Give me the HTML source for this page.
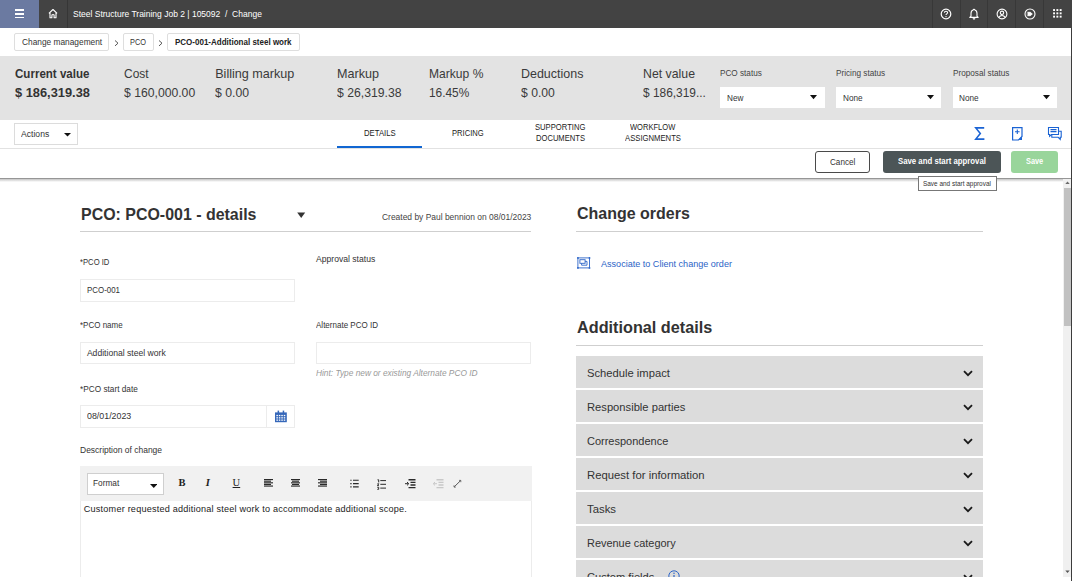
<!DOCTYPE html>
<html><head><meta charset="utf-8"><style>
html,body{margin:0;padding:0;width:1072px;height:581px;overflow:hidden;background:#fff;position:relative}
body>div,body>svg{position:absolute}
.t{position:absolute;white-space:pre;font-family:"Liberation Sans",sans-serif}
</style></head><body>
<div style="left:0px;top:0px;width:1072px;height:28px;background:#434343"></div>
<div style="left:0px;top:0px;width:39px;height:28px;background:#6b7aa1"></div>
<div style="left:15px;top:9.3px;width:9px;height:1.35px;background:#fff"></div>
<div style="left:15px;top:13.2px;width:9px;height:1.35px;background:#fff"></div>
<div style="left:15px;top:16.9px;width:9px;height:1.35px;background:#fff"></div>
<div style="left:67px;top:0px;width:1px;height:28px;background:#363636"></div>
<svg style="position:absolute;left:47px;top:8px" width="12" height="11" viewBox="0 0 12 11"><path d="M1.9 5.4 L6 1.5 L10.1 5.4 M3 4.5 V9.8 H4.9 V7 Q6 6 7.1 7 V9.8 H9 V4.5" fill="none" stroke="#fff" stroke-width="1.1" stroke-linejoin="round"/></svg>
<div class="t" style="left:73.4px;top:9.07px;font-size:9.6px;line-height:9.6px;color:#fff;transform:scaleX(0.886);transform-origin:0 0;font-weight:500;">Steel Structure Training Job 2 | 105092&nbsp;&nbsp;/&nbsp;&nbsp;Change</div>
<div style="left:932.3px;top:0px;width:1.0px;height:28px;background:#383838"></div>
<div style="left:960.2px;top:0px;width:1.0px;height:28px;background:#383838"></div>
<div style="left:987.4px;top:0px;width:1.0px;height:28px;background:#383838"></div>
<div style="left:1015px;top:0px;width:1px;height:28px;background:#383838"></div>
<div style="left:1042.8px;top:0px;width:1.0px;height:28px;background:#383838"></div>
<svg style="position:absolute;left:940px;top:7.5px" width="12" height="12" viewBox="0 0 12 12"><circle cx="6" cy="6" r="4.8" fill="none" stroke="#fff" stroke-width="1.2"/><path d="M4.4 4.7 Q4.4 3.2 6 3.2 Q7.6 3.2 7.6 4.6 Q7.6 5.5 6.6 5.9 Q6 6.2 6 7" fill="none" stroke="#fff" stroke-width="1.1"/><circle cx="6" cy="8.6" r="0.7" fill="#fff"/></svg>
<svg style="position:absolute;left:968px;top:7.5px" width="12" height="12" viewBox="0 0 12 12"><path d="M6 1.2 Q6.8 1.2 6.8 2 Q9 2.6 9 5.4 V8.2 L10.2 9.4 H1.8 L3 8.2 V5.4 Q3 2.6 5.2 2 Q5.2 1.2 6 1.2 Z" fill="none" stroke="#fff" stroke-width="1.1" stroke-linejoin="round"/><path d="M4.9 10.3 Q6 11.6 7.1 10.3" fill="none" stroke="#fff" stroke-width="1.1"/></svg>
<svg style="position:absolute;left:996px;top:7.5px" width="12" height="12" viewBox="0 0 12 12"><circle cx="6" cy="6" r="4.9" fill="none" stroke="#fff" stroke-width="1.1"/><circle cx="6" cy="4.8" r="1.7" fill="none" stroke="#fff" stroke-width="1.1"/><path d="M2.9 9.4 Q4 7.5 6 7.5 Q8 7.5 9.1 9.4" fill="none" stroke="#fff" stroke-width="1.1"/></svg>
<svg style="position:absolute;left:1024px;top:7.5px" width="12" height="12" viewBox="0 0 12 12"><circle cx="6" cy="6" r="5" fill="none" stroke="#fff" stroke-width="1.1"/><path d="M3.3 4.3 H6.3 L8.3 6 L6.3 7.7 H3.3 Z" fill="#fff" stroke="#fff" stroke-width="0.9" stroke-linejoin="round"/><path d="M3.3 4.3 V7.7" stroke="#434343" stroke-width="0.6"/></svg>
<svg style="position:absolute;left:1053.3px;top:9.2px" width="10" height="10" viewBox="0 0 10 10"><rect x="0.1" y="0.1" width="1.9" height="1.9" fill="#fff"/><rect x="0.1" y="3.4" width="1.9" height="1.9" fill="#fff"/><rect x="0.1" y="6.699999999999999" width="1.9" height="1.9" fill="#fff"/><rect x="3.4" y="0.1" width="1.9" height="1.9" fill="#fff"/><rect x="3.4" y="3.4" width="1.9" height="1.9" fill="#fff"/><rect x="3.4" y="6.699999999999999" width="1.9" height="1.9" fill="#fff"/><rect x="6.699999999999999" y="0.1" width="1.9" height="1.9" fill="#fff"/><rect x="6.699999999999999" y="3.4" width="1.9" height="1.9" fill="#fff"/><rect x="6.699999999999999" y="6.699999999999999" width="1.9" height="1.9" fill="#fff"/></svg>
<div style="left:14.3px;top:33.2px;width:95.2px;height:17.6px;border:1px solid #dedede;border-radius:2px;background:#fff;box-sizing:border-box;"></div>
<div class="t" style="left:21.8px;top:38.12px;font-size:8.6px;line-height:8.6px;color:#333;transform:scaleX(0.97);transform-origin:0 0;">Change management</div>
<svg style="position:absolute;left:112.5px;top:39px" width="7" height="8" viewBox="0 0 7 8"><path d="M2 1.5 L5 4.2 L2 6.9" fill="none" stroke="#555" stroke-width="1"/></svg>
<div style="left:123.3px;top:33.2px;width:30.5px;height:17.6px;border:1px solid #dedede;border-radius:2px;background:#fff;box-sizing:border-box;"></div>
<div class="t" style="left:130.4px;top:38.12px;font-size:8.6px;line-height:8.6px;color:#333;transform:scaleX(0.859);transform-origin:0 0;">PCO</div>
<svg style="position:absolute;left:157px;top:39px" width="7" height="8" viewBox="0 0 7 8"><path d="M2 1.5 L5 4.2 L2 6.9" fill="none" stroke="#555" stroke-width="1"/></svg>
<div style="left:167.4px;top:33.2px;width:132.2px;height:17.6px;border:1px solid #dedede;border-radius:2px;background:#fff;box-sizing:border-box;"></div>
<div class="t" style="left:175px;top:38.17px;font-size:8.3px;line-height:8.3px;color:#222;font-weight:bold;transform:scaleX(0.965);transform-origin:0 0;">PCO-001-Additional steel work</div>
<div style="left:0px;top:56px;width:1072px;height:64px;background:#e3e3e3"></div>
<div class="t" style="left:14.5px;top:67.53px;font-size:12.6px;line-height:12.6px;color:#333;font-weight:bold;transform:scaleX(0.917);transform-origin:0 0;">Current value</div>
<div class="t" style="left:14.5px;top:86.73px;font-size:12.6px;line-height:12.6px;color:#333;font-weight:bold;transform:scaleX(1.019);transform-origin:0 0;">$ 186,319.38</div>
<div class="t" style="left:123.6px;top:67.53px;font-size:12.6px;line-height:12.6px;color:#3a3a3a;transform:scaleX(0.95);transform-origin:0 0;">Cost</div>
<div class="t" style="left:123.6px;top:86.73px;font-size:12.6px;line-height:12.6px;color:#3a3a3a;transform:scaleX(0.968);transform-origin:0 0;">$ 160,000.00</div>
<div class="t" style="left:215.2px;top:67.53px;font-size:12.6px;line-height:12.6px;color:#3a3a3a;">Billing markup</div>
<div class="t" style="left:215.2px;top:86.73px;font-size:12.6px;line-height:12.6px;color:#3a3a3a;transform:scaleX(0.971);transform-origin:0 0;">$ 0.00</div>
<div class="t" style="left:337px;top:67.53px;font-size:12.6px;line-height:12.6px;color:#3a3a3a;">Markup</div>
<div class="t" style="left:337px;top:86.73px;font-size:12.6px;line-height:12.6px;color:#3a3a3a;transform:scaleX(0.969);transform-origin:0 0;">$ 26,319.38</div>
<div class="t" style="left:428.8px;top:67.53px;font-size:12.6px;line-height:12.6px;color:#3a3a3a;transform:scaleX(0.959);transform-origin:0 0;">Markup %</div>
<div class="t" style="left:428.8px;top:86.73px;font-size:12.6px;line-height:12.6px;color:#3a3a3a;transform:scaleX(0.943);transform-origin:0 0;">16.45%</div>
<div class="t" style="left:521.2px;top:67.53px;font-size:12.6px;line-height:12.6px;color:#3a3a3a;transform:scaleX(0.99);transform-origin:0 0;">Deductions</div>
<div class="t" style="left:521.2px;top:86.73px;font-size:12.6px;line-height:12.6px;color:#3a3a3a;transform:scaleX(0.965);transform-origin:0 0;">$ 0.00</div>
<div class="t" style="left:642.7px;top:67.53px;font-size:12.6px;line-height:12.6px;color:#3a3a3a;transform:scaleX(0.977);transform-origin:0 0;">Net value</div>
<div class="t" style="left:642.7px;top:86.73px;font-size:12.6px;line-height:12.6px;color:#3a3a3a;transform:scaleX(0.944);transform-origin:0 0;">$ 186,319...</div>
<div class="t" style="left:719.7px;top:69.03px;font-size:8.7px;line-height:8.7px;color:#444;transform:scaleX(0.942);transform-origin:0 0;">PCO status</div>
<div style="left:720px;top:86.7px;width:104.5px;height:21.1px;background:#fff"></div>
<div class="t" style="left:726.5px;top:93.73px;font-size:8.7px;line-height:8.7px;color:#333;transform:scaleX(0.943);transform-origin:0 0;">New</div>
<svg style="position:absolute;left:810.0px;top:95px" width="7" height="4.5" viewBox="0 0 7 4.5"><path d="M0 0 H7 L3.5 4.2 Z" fill="#111"/></svg>
<div class="t" style="left:835.9px;top:69.03px;font-size:8.7px;line-height:8.7px;color:#444;transform:scaleX(0.943);transform-origin:0 0;">Pricing status</div>
<div style="left:836.2px;top:86.7px;width:104.8px;height:21.1px;background:#fff"></div>
<div class="t" style="left:842.7px;top:93.73px;font-size:8.7px;line-height:8.7px;color:#333;transform:scaleX(0.943);transform-origin:0 0;">None</div>
<svg style="position:absolute;left:926.5px;top:95px" width="7" height="4.5" viewBox="0 0 7 4.5"><path d="M0 0 H7 L3.5 4.2 Z" fill="#111"/></svg>
<div class="t" style="left:952.5px;top:69.03px;font-size:8.7px;line-height:8.7px;color:#444;transform:scaleX(0.943);transform-origin:0 0;">Proposal status</div>
<div style="left:952.8px;top:86.7px;width:104.4px;height:21.1px;background:#fff"></div>
<div class="t" style="left:959.3px;top:93.73px;font-size:8.7px;line-height:8.7px;color:#333;transform:scaleX(0.943);transform-origin:0 0;">None</div>
<svg style="position:absolute;left:1042.7px;top:95px" width="7" height="4.5" viewBox="0 0 7 4.5"><path d="M0 0 H7 L3.5 4.2 Z" fill="#111"/></svg>
<div style="left:0px;top:148px;width:1071px;height:1px;background:#e2e2e2"></div>
<div style="left:14.2px;top:123px;width:63.6px;height:22px;border:1px solid #dcdcdc;box-sizing:border-box;"></div>
<div class="t" style="left:21px;top:130.26px;font-size:8.9px;line-height:8.9px;color:#333;transform:scaleX(0.97);transform-origin:0 0;">Actions</div>
<svg style="position:absolute;left:64.3px;top:132.5px" width="7" height="4" viewBox="0 0 7 4"><path d="M0 0 H7 L3.5 3.6 Z" fill="#111"/></svg>
<div class="t" style="left:363.6px;top:128.52px;font-size:8.6px;line-height:8.6px;color:#222;transform:scaleX(0.9);transform-origin:0 0;">DETAILS</div>
<div style="left:337.2px;top:145.9px;width:84.5px;height:1.9px;background:#1166d2"></div>
<div class="t" style="left:452px;top:128.52px;font-size:8.6px;line-height:8.6px;color:#222;transform:scaleX(0.885);transform-origin:0 0;">PRICING</div>
<div class="t" style="left:535.1px;top:122.72px;font-size:8.6px;line-height:8.6px;color:#222;transform:scaleX(0.889);transform-origin:0 0;">SUPPORTING</div>
<div class="t" style="left:536.0px;top:133.92px;font-size:8.6px;line-height:8.6px;color:#222;transform:scaleX(0.884);transform-origin:0 0;">DOCUMENTS</div>
<div class="t" style="left:630.45px;top:122.72px;font-size:8.6px;line-height:8.6px;color:#222;transform:scaleX(0.878);transform-origin:0 0;">WORKFLOW</div>
<div class="t" style="left:625.0px;top:133.92px;font-size:8.6px;line-height:8.6px;color:#222;transform:scaleX(0.895);transform-origin:0 0;">ASSIGNMENTS</div>
<svg style="position:absolute;left:974px;top:126px" width="12" height="15" viewBox="0 0 12 15"><path d="M10.2 1.9 H1.8 L6.3 7.5 L1.8 13.1 H10.4" fill="none" stroke="#1a63d4" stroke-width="1.6" stroke-linejoin="miter"/></svg>
<svg style="position:absolute;left:1011px;top:126px" width="13" height="15" viewBox="0 0 13 15"><path d="M1.6 1.6 H11 V10.5 L7.5 14 H1.6 Z" fill="none" stroke="#1a63d4" stroke-width="1.2"/><path d="M11 10.5 V14 H7.5 Z" fill="#1a63d4"/><path d="M6.3 3.4 V8 M4 5.7 H8.6" stroke="#1a63d4" stroke-width="1.1"/></svg>
<svg style="position:absolute;left:1047px;top:126px" width="16" height="15" viewBox="0 0 16 15"><path d="M1.5 1.5 H11.5 V8.5 H4.5 L2.6 10.2 V8.5 H1.5 Z" fill="#fff" stroke="#1a63d4" stroke-width="1.1"/><path d="M4.8 8.8 V11.3 H11.2 L13.2 13.4 V11.3 H14.2 V5.3 H11.5" fill="none" stroke="#1a63d4" stroke-width="1.1"/><path d="M3.5 3.6 H9.5 M3.5 5.6 H9.5" stroke="#1a63d4" stroke-width="1.1"/></svg>
<div style="left:815.2px;top:151.3px;width:54.6px;height:21.5px;border:1px solid #4a4a4a;border-radius:3px;box-sizing:border-box;background:#fff"></div>
<div class="t" style="left:829.85px;top:157.62px;font-size:8.6px;line-height:8.6px;color:#333;transform:scaleX(0.945);transform-origin:0 0;">Cancel</div>
<div style="left:883.2px;top:151.3px;width:117.4px;height:21.5px;background:#4c5557;border-radius:3px"></div>
<div class="t" style="left:897.7px;top:157.45px;font-size:8.8px;line-height:8.8px;color:#fff;font-weight:bold;transform:scaleX(0.886);transform-origin:0 0;">Save and start approval</div>
<div style="left:1010.6px;top:151.3px;width:47.4px;height:21.5px;background:#99d59b;border-radius:3px"></div>
<div class="t" style="left:1025.7px;top:157.45px;font-size:8.8px;line-height:8.8px;color:#fff;font-weight:bold;transform:scaleX(0.837);transform-origin:0 0;">Save</div>
<div style="left:0px;top:177.5px;width:1071px;height:1.8px;background:#969696"></div>
<div style="left:0px;top:179.3px;width:1071px;height:2.3px;background:linear-gradient(#c4c4c4,#fff)"></div>
<div class="t" style="left:80.5px;top:207.34px;font-size:16.6px;line-height:16.6px;color:#333;font-weight:bold;transform:scaleX(0.961);transform-origin:0 0;">PCO: PCO-001 - details</div>
<svg style="position:absolute;left:297px;top:212px" width="8.5" height="6.5" viewBox="0 0 8.5 6.5"><path d="M0.2 0.5 H8.2 L4.2 6 Z" fill="#333"/></svg>
<div class="t" style="left:382.4px;top:213.03px;font-size:8.7px;line-height:8.7px;color:#444;transform:scaleX(0.972);transform-origin:0 0;">Created by Paul bennion on 08/01/2023</div>
<div style="left:80px;top:231px;width:451px;height:1.2px;background:#cfcfcf"></div>
<div class="t" style="left:80.2px;top:257.62px;font-size:8.6px;line-height:8.6px;color:#333;transform:scaleX(0.892);transform-origin:0 0;">*PCO ID</div>
<div style="left:80.1px;top:279.2px;width:214.7px;height:22.7px;border:1px solid #ececec;box-sizing:border-box;background:#fff;"></div>
<div class="t" style="left:87.3px;top:285.52px;font-size:8.6px;line-height:8.6px;color:#333;transform:scaleX(0.921);transform-origin:0 0;">PCO-001</div>
<div class="t" style="left:316px;top:254.72px;font-size:8.6px;line-height:8.6px;color:#333;">Approval status</div>
<div class="t" style="left:80.2px;top:320.82px;font-size:8.6px;line-height:8.6px;color:#333;transform:scaleX(0.93);transform-origin:0 0;">*PCO name</div>
<div style="left:80.1px;top:342.1px;width:214.7px;height:21.8px;border:1px solid #ececec;box-sizing:border-box;background:#fff;"></div>
<div class="t" style="left:86.9px;top:348.62px;font-size:8.6px;line-height:8.6px;color:#333;">Additional steel work</div>
<div class="t" style="left:316px;top:320.82px;font-size:8.6px;line-height:8.6px;color:#333;transform:scaleX(0.933);transform-origin:0 0;">Alternate PCO ID</div>
<div style="left:316px;top:342.1px;width:215px;height:21.8px;border:1px solid #ececec;box-sizing:border-box;background:#fff;"></div>
<div class="t" style="left:316.4px;top:369.12px;font-size:8.6px;line-height:8.6px;color:#999;font-style:italic;transform:scaleX(0.969);transform-origin:0 0;">Hint: Type new or existing Alternate PCO ID</div>
<div class="t" style="left:80.2px;top:385.02px;font-size:8.6px;line-height:8.6px;color:#333;transform:scaleX(0.96);transform-origin:0 0;">*PCO start date</div>
<div style="left:80.1px;top:405.2px;width:214.7px;height:22.7px;border:1px solid #ececec;box-sizing:border-box;background:#fff;"></div>
<div style="left:266.4px;top:405.2px;width:1.0px;height:22.7px;background:#ececec"></div>
<div class="t" style="left:86.9px;top:412.42px;font-size:8.6px;line-height:8.6px;color:#333;transform:scaleX(1.029);transform-origin:0 0;">08/01/2023</div>
<svg style="position:absolute;left:275px;top:409.8px" width="12" height="13" viewBox="0 0 12 13"><rect x="0" y="2.4" width="11.8" height="9.8" fill="#3567b9"/><rect x="2.6" y="0.6" width="1.5" height="2.6" fill="#3567b9"/><rect x="7.7" y="0.6" width="1.5" height="2.6" fill="#3567b9"/><rect x="1.4" y="4.9" width="1.5" height="1.3" fill="#fff"/><rect x="1.4" y="7.2" width="1.5" height="1.3" fill="#fff"/><rect x="1.4" y="9.5" width="1.5" height="1.3" fill="#fff"/><rect x="3.85" y="4.9" width="1.5" height="1.3" fill="#fff"/><rect x="3.85" y="7.2" width="1.5" height="1.3" fill="#fff"/><rect x="3.85" y="9.5" width="1.5" height="1.3" fill="#fff"/><rect x="6.300000000000001" y="4.9" width="1.5" height="1.3" fill="#fff"/><rect x="6.300000000000001" y="7.2" width="1.5" height="1.3" fill="#fff"/><rect x="6.300000000000001" y="9.5" width="1.5" height="1.3" fill="#fff"/><rect x="8.75" y="4.9" width="1.5" height="1.3" fill="#fff"/><rect x="8.75" y="7.2" width="1.5" height="1.3" fill="#fff"/><rect x="8.75" y="9.5" width="1.5" height="1.3" fill="#fff"/></svg>
<div class="t" style="left:79.6px;top:445.92px;font-size:8.6px;line-height:8.6px;color:#333;transform:scaleX(0.987);transform-origin:0 0;">Description of change</div>
<div style="left:80.2px;top:466.2px;width:451.6px;height:133.8px;border:1px solid #ececec;box-sizing:border-box;background:#fff"></div>
<div style="left:80.2px;top:466.2px;width:451.6px;height:34.6px;background:#f1f1f1"></div>
<div style="left:87.2px;top:473.2px;width:76.4px;height:21.4px;border:1px solid #cfcfcf;box-sizing:border-box;background:#fff"></div>
<div class="t" style="left:92.8px;top:478.92px;font-size:8.6px;line-height:8.6px;color:#333;transform:scaleX(0.962);transform-origin:0 0;">Format</div>
<svg style="position:absolute;left:149.8px;top:483.5px" width="7.5" height="4.5" viewBox="0 0 7.5 4.5"><path d="M0 0 H7.5 L3.75 4 Z" fill="#111"/></svg>
<div class="t" style="left:178.6px;top:477px;font-family:'Liberation Serif',serif;font-weight:bold;font-size:10.5px;line-height:12px;color:#222">B</div>
<div class="t" style="left:205.8px;top:477px;font-family:'Liberation Serif',serif;font-weight:bold;font-style:italic;font-size:10.5px;line-height:12px;color:#222">I</div>
<div class="t" style="left:232.6px;top:477px;font-family:'Liberation Serif',serif;font-size:10.5px;line-height:12px;color:#222;text-decoration:underline">U</div>
<svg style="position:absolute;left:264.3px;top:479.2px" width="12" height="10" viewBox="0 0 12 10"><rect x="0" y="0.0" width="9" height="1.15" fill="#2a2a2a"/><rect x="0" y="1.62" width="7" height="1.15" fill="#2a2a2a"/><rect x="0" y="3.24" width="9" height="1.15" fill="#2a2a2a"/><rect x="0" y="4.86" width="7" height="1.15" fill="#2a2a2a"/><rect x="0" y="6.48" width="9" height="1.15" fill="#2a2a2a"/></svg>
<svg style="position:absolute;left:291.2px;top:479.2px" width="12" height="10" viewBox="0 0 12 10"><rect x="0" y="0.0" width="9" height="1.15" fill="#2a2a2a"/><rect x="1" y="1.62" width="7" height="1.15" fill="#2a2a2a"/><rect x="0" y="3.24" width="9" height="1.15" fill="#2a2a2a"/><rect x="1" y="4.86" width="7" height="1.15" fill="#2a2a2a"/><rect x="0" y="6.48" width="9" height="1.15" fill="#2a2a2a"/></svg>
<svg style="position:absolute;left:318.2px;top:479.2px" width="12" height="10" viewBox="0 0 12 10"><rect x="0" y="0.0" width="9" height="1.15" fill="#2a2a2a"/><rect x="2" y="1.62" width="7" height="1.15" fill="#2a2a2a"/><rect x="0" y="3.24" width="9" height="1.15" fill="#2a2a2a"/><rect x="2" y="4.86" width="7" height="1.15" fill="#2a2a2a"/><rect x="0" y="6.48" width="9" height="1.15" fill="#2a2a2a"/></svg>
<svg style="position:absolute;left:350px;top:479px" width="10" height="10" viewBox="0 0 10 10"><path d="M0.3 1.3 h1.3 M0.3 4.6 h1.3 M0.3 7.9 h1.3 M3 1.3 H8.7 M3 4.6 H8.7 M3 7.9 H8.7" stroke="#2a2a2a" stroke-width="1.1"/></svg>
<svg style="position:absolute;left:377px;top:478.5px" width="10" height="11" viewBox="0 0 10 11"><path d="M0.5 0.8 h1.2 v2.6 M0.4 4.8 h1.4 l-1.4 1.8 h1.5 M0.3 8.3 h1.4 v2 h-1.4 M3.3 1.6 H9 M3.3 5.3 H9 M3.3 9.1 H9" fill="none" stroke="#2a2a2a" stroke-width="1"/></svg>
<svg style="position:absolute;left:405px;top:479px" width="11" height="10" viewBox="0 0 11 10"><path d="M3.5 0.8 H10.5 M5.5 3.4 H10.5 M5.5 6 H10.5 M3.5 8.6 H10.5" stroke="#2a2a2a" stroke-width="1.4"/><path d="M0 4.7 H3.2 M2 3 L3.8 4.7 L2 6.4" fill="none" stroke="#2a2a2a" stroke-width="1"/></svg>
<svg style="position:absolute;left:432.5px;top:479px" width="11" height="10" viewBox="0 0 11 10"><path d="M3.5 0.8 H10.5 M5.5 3.4 H10.5 M5.5 6 H10.5 M3.5 8.6 H10.5" stroke="#c8c8c8" stroke-width="1.4"/><path d="M4 4.7 H0.8 M2 3 L0.2 4.7 L2 6.4" fill="none" stroke="#c8c8c8" stroke-width="1"/></svg>
<svg style="position:absolute;left:453px;top:478.5px" width="9" height="10" viewBox="0 0 9 10"><path d="M1.2 7.9 L7.6 1.6" fill="none" stroke="#444" stroke-width="0.9"/><path d="M6 1.4 H7.8 V3.2 M1 6.3 V8.1 H2.8" fill="none" stroke="#555" stroke-width="0.8"/></svg>
<div class="t" style="left:83.8px;top:504.3px;font-size:9.1px;line-height:10px;color:#222;letter-spacing:0.21px;font-family:'Liberation Sans',sans-serif">Customer requested additional steel work to accommodate additional scope.</div>
<div class="t" style="left:576.7px;top:206.34px;font-size:16.6px;line-height:16.6px;color:#333;font-weight:bold;transform:scaleX(0.963);transform-origin:0 0;">Change orders</div>
<div style="left:576px;top:231px;width:407px;height:1.2px;background:#cfcfcf"></div>
<svg style="position:absolute;left:575.7px;top:256px" width="15" height="13" viewBox="0 0 15 13"><rect x="1.9" y="1.9" width="11.6" height="10" fill="none" stroke="#2e66c8" stroke-width="0.9"/><rect x="3.9" y="3.7" width="5.2" height="3.6" fill="none" stroke="#2e66c8" stroke-width="0.9"/><path d="M5.6 7.3 V9.2 H11 V5.4 H9.1" fill="none" stroke="#2e66c8" stroke-width="0.9"/><circle cx="1.9" cy="1.9" r="0.95" fill="#2e66c8"/><circle cx="13.5" cy="1.9" r="0.95" fill="#2e66c8"/><circle cx="1.9" cy="11.9" r="0.95" fill="#2e66c8"/><circle cx="13.5" cy="11.9" r="0.95" fill="#2e66c8"/></svg>
<div class="t" style="left:601px;top:259.75px;font-size:8.8px;line-height:8.8px;color:#2b63c6;transform:scaleX(1.03);transform-origin:0 0;">Associate to Client change order</div>
<div class="t" style="left:577.2px;top:320.24px;font-size:16.6px;line-height:16.6px;color:#333;font-weight:bold;transform:scaleX(0.978);transform-origin:0 0;">Additional details</div>
<div style="left:576px;top:345px;width:407px;height:1.2px;background:#cfcfcf"></div>
<div style="left:576px;top:355.9px;width:407px;height:32.5px;background:#dcdcdc"></div>
<div class="t" style="left:586.8px;top:366.58px;font-size:11.6px;line-height:11.6px;color:#333;transform:scaleX(0.967);transform-origin:0 0;">Schedule impact</div>
<svg style="position:absolute;left:963.1px;top:369.7px" width="10" height="7" viewBox="0 0 10 7"><path d="M1 1.2 L5 5.2 L9 1.2" fill="none" stroke="#1a1a1a" stroke-width="1.8"/></svg>
<div style="left:576px;top:389.9px;width:407px;height:32.5px;background:#dcdcdc"></div>
<div class="t" style="left:586.8px;top:400.58px;font-size:11.6px;line-height:11.6px;color:#333;transform:scaleX(0.965);transform-origin:0 0;">Responsible parties</div>
<svg style="position:absolute;left:963.1px;top:403.7px" width="10" height="7" viewBox="0 0 10 7"><path d="M1 1.2 L5 5.2 L9 1.2" fill="none" stroke="#1a1a1a" stroke-width="1.8"/></svg>
<div style="left:576px;top:423.9px;width:407px;height:32.5px;background:#dcdcdc"></div>
<div class="t" style="left:586.8px;top:434.58px;font-size:11.6px;line-height:11.6px;color:#333;transform:scaleX(0.948);transform-origin:0 0;">Correspondence</div>
<svg style="position:absolute;left:963.1px;top:437.7px" width="10" height="7" viewBox="0 0 10 7"><path d="M1 1.2 L5 5.2 L9 1.2" fill="none" stroke="#1a1a1a" stroke-width="1.8"/></svg>
<div style="left:576px;top:457.9px;width:407px;height:32.5px;background:#dcdcdc"></div>
<div class="t" style="left:586.8px;top:468.58px;font-size:11.6px;line-height:11.6px;color:#333;transform:scaleX(0.976);transform-origin:0 0;">Request for information</div>
<svg style="position:absolute;left:963.1px;top:471.7px" width="10" height="7" viewBox="0 0 10 7"><path d="M1 1.2 L5 5.2 L9 1.2" fill="none" stroke="#1a1a1a" stroke-width="1.8"/></svg>
<div style="left:576px;top:491.9px;width:407px;height:32.5px;background:#dcdcdc"></div>
<div class="t" style="left:586.8px;top:502.58px;font-size:11.6px;line-height:11.6px;color:#333;transform:scaleX(0.978);transform-origin:0 0;">Tasks</div>
<svg style="position:absolute;left:963.1px;top:505.7px" width="10" height="7" viewBox="0 0 10 7"><path d="M1 1.2 L5 5.2 L9 1.2" fill="none" stroke="#1a1a1a" stroke-width="1.8"/></svg>
<div style="left:576px;top:525.9px;width:407px;height:32.5px;background:#dcdcdc"></div>
<div class="t" style="left:586.8px;top:536.58px;font-size:11.6px;line-height:11.6px;color:#333;transform:scaleX(0.942);transform-origin:0 0;">Revenue category</div>
<svg style="position:absolute;left:963.1px;top:539.6999999999999px" width="10" height="7" viewBox="0 0 10 7"><path d="M1 1.2 L5 5.2 L9 1.2" fill="none" stroke="#1a1a1a" stroke-width="1.8"/></svg>
<div style="left:576px;top:559.9px;width:407px;height:32.5px;background:#dcdcdc"></div>
<div class="t" style="left:586.8px;top:570.58px;font-size:11.6px;line-height:11.6px;color:#333;transform:scaleX(0.958);transform-origin:0 0;">Custom fields</div>
<svg style="position:absolute;left:963.1px;top:573.6999999999999px" width="10" height="7" viewBox="0 0 10 7"><path d="M1 1.2 L5 5.2 L9 1.2" fill="none" stroke="#1a1a1a" stroke-width="1.8"/></svg>
<svg style="position:absolute;left:667.5px;top:570.1px" width="12" height="12" viewBox="0 0 12 12"><circle cx="6" cy="6" r="5.2" fill="none" stroke="#2e66c8" stroke-width="1"/><path d="M6 5 V9" stroke="#2e66c8" stroke-width="1.2"/><circle cx="6" cy="3.3" r="0.75" fill="#2e66c8"/></svg>
<div style="left:0px;top:577px;width:1071px;height:4px;background:#fff"></div>
<div style="left:1062.8px;top:179.2px;width:8.0px;height:397.8px;background:#f0f0f0"></div>
<div style="left:1064px;top:188px;width:6.6px;height:138px;background:#c1c1c1"></div>
<svg style="position:absolute;left:1065px;top:181.2px" width="5" height="4" viewBox="0 0 5 4"><path d="M0.3 3 L2.5 0.6 L4.7 3 Z" fill="#6a6a6a"/></svg>
<svg style="position:absolute;left:1064.6px;top:570.4px" width="5" height="4" viewBox="0 0 5 4"><path d="M0.3 0.4 L2.5 2.9 L4.7 0.4 Z" fill="#555"/></svg>
<div style="left:1070.8px;top:28px;width:1.2px;height:553px;background:#3c3c3c"></div>
<div style="left:918.2px;top:176.2px;width:78.5px;height:14.5px;border:1px solid #777;box-sizing:border-box;background:#fff"></div>
<div class="t" style="left:922.6px;top:181.01px;font-size:6.6px;line-height:6.6px;color:#333;transform:scaleX(0.975);transform-origin:0 0;">Save and start approval</div>
</body></html>
